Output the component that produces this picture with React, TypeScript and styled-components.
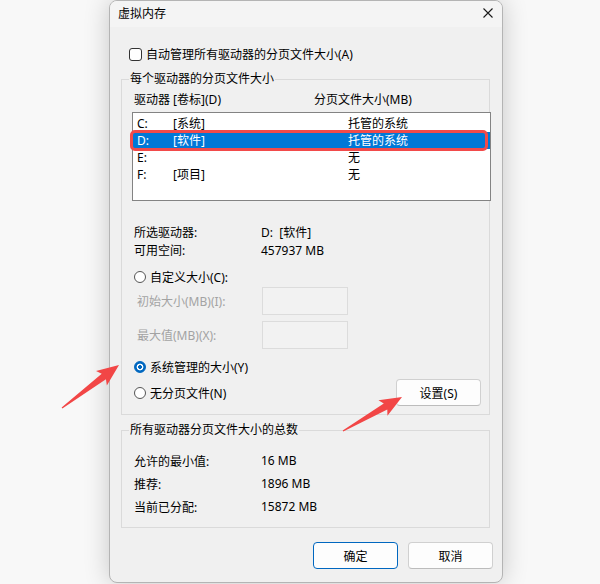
import React from 'react';
import styled, { createGlobalStyle } from 'styled-components';

const GlobalStyle = createGlobalStyle`
  html, body {
    margin: 0;
    padding: 0;
    background: #f8f8f8;
    overflow: hidden;
  }
  body {
    font-family: "Noto Sans", "Noto Sans CJK SC", sans-serif;
    font-size: 12px;
    color: #000;
  }
`;

const drives = [
  { letter: 'C:', label: '[系统]', size: '托管的系统' },
  { letter: 'D:', label: '[软件]', size: '托管的系统', selected: true },
  { letter: 'E:', label: '', size: '无' },
  { letter: 'F:', label: '[项目]', size: '无' },
];

const totals = [
  { label: '允许的最小值:', value: '16 MB' },
  { label: '推荐:', value: '1896 MB' },
  { label: '当前已分配:', value: '15872 MB' },
];

// annotation arrows: tail -> tip
const arrows = [
  { x1: 62, y1: 408, x2: 119, y2: 365 },
  { x1: 343, y1: 431, x2: 402, y2: 397 },
];

export default function App() {
  return (
    <Page>
      <GlobalStyle />
      <Dialog>
        <TitleBar>
          <span>虚拟内存</span>
          <CloseIcon viewBox="0 0 10 10">
            <path d="M0.5 0.5 L9.5 9.5 M9.5 0.5 L0.5 9.5" />
          </CloseIcon>
        </TitleBar>

        <Body>
          <CheckRow>
            <CheckBox />
            <span>自动管理所有驱动器的分页文件大小(A)</span>
          </CheckRow>

          <Group>
            <Legend>每个驱动器的分页文件大小</Legend>
            <ListHeader>
              <span>驱动器 [卷标](D)</span>
              <span>分页文件大小(MB)</span>
            </ListHeader>
            <ListBox>
              {drives.map((d) => (
                <DriveRow key={d.letter} selected={!!d.selected}>
                  <DriveLetter>{d.letter}</DriveLetter>
                  <DriveLabel>{d.label}</DriveLabel>
                  <span>{d.size}</span>
                </DriveRow>
              ))}
            </ListBox>

            <InfoBlock>
              <InfoRow>
                <InfoLabel>所选驱动器:</InfoLabel>
                <span>D:&nbsp;&nbsp;[软件]</span>
              </InfoRow>
              <InfoRow>
                <InfoLabel>可用空间:</InfoLabel>
                <span>457937 MB</span>
              </InfoRow>
            </InfoBlock>

            <RadioRow>
              <Radio />
              <span>自定义大小(C):</span>
            </RadioRow>
            <FieldRow>
              <FieldLabel>初始大小(MB)(I):</FieldLabel>
              <FieldBox />
            </FieldRow>
            <FieldRow gap={6}>
              <FieldLabel>最大值(MB)(X):</FieldLabel>
              <FieldBox />
            </FieldRow>
            <RadioRow top={10}>
              <Radio checked />
              <span>系统管理的大小(Y)</span>
            </RadioRow>
            <LastRow>
              <RadioRow top={0}>
                <Radio />
                <span>无分页文件(N)</span>
              </RadioRow>
              <Button>设置(S)</Button>
            </LastRow>
          </Group>

          <Group top={15} bottom={9}>
            <Legend>所有驱动器分页文件大小的总数</Legend>
            <TotalsList>
              {totals.map((t) => (
                <TotalRow key={t.label}>
                  <InfoLabel>{t.label}</InfoLabel>
                  <span>{t.value}</span>
                </TotalRow>
              ))}
            </TotalsList>
          </Group>

          <Footer>
            <Button primary>确定</Button>
            <Button>取消</Button>
          </Footer>
        </Body>
      </Dialog>

      <Annotations viewBox="0 0 600 584">
        {arrows.map((a, i) => {
          const dx = a.x2 - a.x1;
          const dy = a.y2 - a.y1;
          const len = Math.sqrt(dx * dx + dy * dy);
          const angle = (Math.atan2(dy, dx) * 180) / Math.PI;
          const h = len - 19;
          return (
            <polygon
              key={i}
              transform={`translate(${a.x1} ${a.y1}) rotate(${angle})`}
              points={`0,0.6 0,-0.6 ${h},-3.5 ${h - 3},-9 ${len},0 ${h - 3},9 ${h},3.5`}
            />
          );
        })}
      </Annotations>
    </Page>
  );
}

const Page = styled.div`
  position: relative;
  width: 600px;
  height: 584px;
  padding-left: 109px;
  box-sizing: border-box;
`;

const Dialog = styled.div`
  width: 394px;
  box-sizing: border-box;
  background: #f0f0f0;
  border: 1px solid #b4b4b4;
  border-radius: 8px;
  overflow: hidden;
  box-shadow: 0 0 26px rgba(0, 0, 0, 0.2);
`;

const TitleBar = styled.div`
  height: 26px;
  display: flex;
  align-items: center;
  justify-content: space-between;
  padding: 0 9px 3px 8px;
  box-sizing: border-box;
  background: #f4f4f4;
`;

const CloseIcon = styled.svg`
  width: 10px;
  height: 10px;
  fill: none;
  stroke: #1a1a1a;
  stroke-width: 1.1;
`;

const Body = styled.div`
  padding: 0 12px 13px 11px;
`;

const CheckRow = styled.div`
  display: flex;
  align-items: center;
  gap: 4px;
  height: 16px;
  margin-top: 19px;
  padding-left: 8px;
`;

const CheckBox = styled.span`
  width: 11px;
  height: 11px;
  border: 1px solid #333;
  border-radius: 3px;
  background: #fff;
`;

const Group = styled.div<{ top?: number; bottom?: number }>`
  margin-top: ${({ top }) => top ?? 17}px;
  padding-bottom: ${({ bottom }) => bottom ?? 8}px;
  border: 1px solid #dadada;
`;

const Legend = styled.div`
  display: table;
  margin: -9px 0 0 7px;
  padding: 0 1px;
  line-height: 16px;
  background: #f0f0f0;
`;

const ListHeader = styled.div`
  display: grid;
  grid-template-columns: 180px 1fr;
  margin-top: 5px;
  padding-left: 12px;
  line-height: 16px;
`;

const ListBox = styled.div`
  width: 359px;
  height: 89px;
  box-sizing: border-box;
  margin: 4px 0 0 10px;
  padding-top: 2px;
  border: 1px solid #838383;
  background: #fff;
`;

const DriveRow = styled.div<{ selected: boolean }>`
  position: relative;
  display: flex;
  height: 17px;
  line-height: 17px;
  padding-left: 4px;
  background: ${({ selected }) => (selected ? '#0078d7' : 'transparent')};
  color: ${({ selected }) => (selected ? '#fff' : '#000')};

  ${({ selected }) =>
    selected &&
    `
    &::after {
      content: '';
      position: absolute;
      left: -3px;
      right: 2px;
      top: -2px;
      bottom: -2px;
      border: 3px solid #f24a4a;
      border-radius: 5px;
    }
  `}
`;

const DriveLetter = styled.span`
  width: 36px;
`;

const DriveLabel = styled.span`
  width: 175px;
`;

const InfoBlock = styled.div`
  margin-top: 22px;
  padding-left: 12px;
`;

const InfoRow = styled.div`
  display: flex;
  height: 18px;
  align-items: center;
`;

const InfoLabel = styled.span`
  width: 127px;
`;

const RadioRow = styled.div<{ top?: number }>`
  display: flex;
  align-items: center;
  gap: 4px;
  height: 16px;
  margin-top: ${({ top }) => top ?? 10}px;
  padding-left: 12px;
`;

const Radio = styled.span<{ checked?: boolean }>`
  width: 12px;
  height: 12px;
  box-sizing: border-box;
  border-radius: 50%;
  border: 1px solid ${({ checked }) => (checked ? '#0067c0' : '#555')};
  background: ${({ checked }) =>
    checked
      ? 'radial-gradient(circle, #0067c0 0 1.6px, #fff 2.2px 3.1px, #0067c0 3.7px)'
      : '#fff'};
`;

const FieldRow = styled.div<{ gap?: number }>`
  display: flex;
  align-items: center;
  margin-top: ${({ gap }) => gap ?? 2}px;
  padding-left: 15px;
`;

const FieldLabel = styled.span`
  width: 125px;
  color: #a3a3a3;
`;

const FieldBox = styled.span`
  width: 86px;
  height: 28px;
  box-sizing: border-box;
  border: 1px solid #dcdcdc;
  background: #f2f2f2;
`;

const LastRow = styled.div`
  display: flex;
  align-items: center;
  justify-content: space-between;
  margin-top: 4px;
  padding-right: 8px;
`;

const Button = styled.button<{ primary?: boolean }>`
  width: 85px;
  height: 27px;
  box-sizing: border-box;
  padding: 0;
  font: inherit;
  color: #000;
  background: #fdfdfd;
  border: 1px solid ${({ primary }) => (primary ? '#0067c0' : '#d0d0d0')};
  border-bottom-color: ${({ primary }) => (primary ? '#0067c0' : '#bcbcbc')};
  border-radius: 4px;
`;

const TotalsList = styled.div`
  margin-top: 11px;
  padding-left: 12px;
`;

const TotalRow = styled.div`
  display: flex;
  align-items: center;
  height: 23px;
`;

const Footer = styled.div`
  display: flex;
  justify-content: flex-end;
  gap: 10px;
  margin: 14px -3px 0 0;
`;

const Annotations = styled.svg`
  position: absolute;
  left: 0;
  top: 0;
  width: 600px;
  height: 584px;
  pointer-events: none;
  fill: #f24646;
`;
